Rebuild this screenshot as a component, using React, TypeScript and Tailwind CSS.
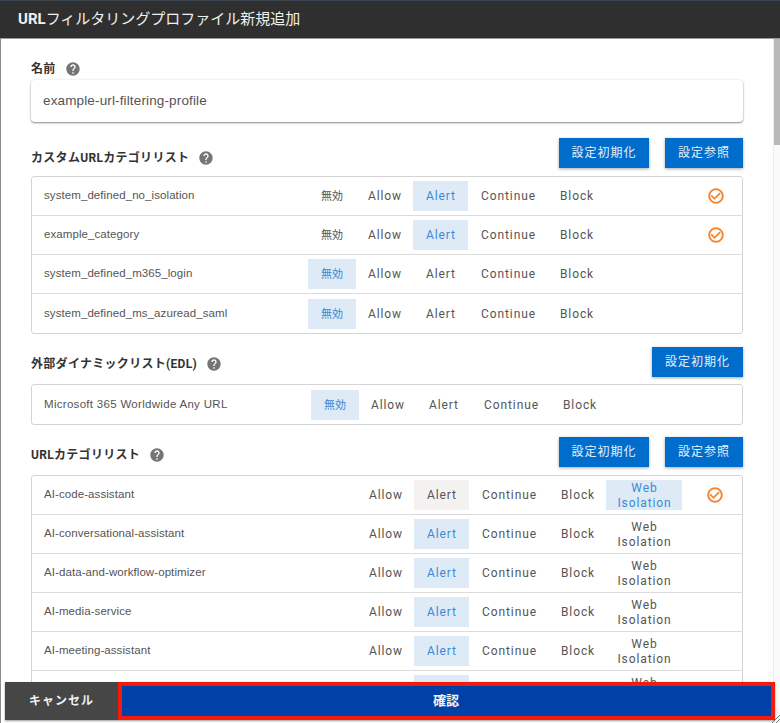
const help = "M12 2C6.48 2 2 6.48 2 12s4.48 10 10 10 10-4.48 10-10S17.52 2 12 2zm1 17h-2v-2h2v2zm2.07-7.75l-.9.92C13.45 12.9 13 13.5 13 15h-2v-.5c0-1.1.45-2.1 1.17-2.83l1.24-1.26c.37-.36.59-.86.59-1.41 0-1.1-.9-2-2-2s-2 .9-2 2H8c0-2.21 1.79-4 4-4s4 1.79 4 4c0 .88-.36 1.68-.93 2.25z";
const check = "M16.59 7.58L10 14.17l-3.59-3.58L5 12l5 5 8-8zM12 2C6.48 2 2 6.48 2 12s4.48 10 10 10 10-4.48 10-10S17.52 2 12 2zm0 18c-4.42 0-8-3.58-8-8s3.58-8 8-8 8 3.58 8 8-3.58 8-8 8z";

function Help() {
  return (
    <svg viewBox="0 0 24 24" className="w-4 h-4 ml-[9px] fill-[#757575] shrink-0">
      <path d={help} />
    </svg>
  );
}

function Heading({ children }: { children: React.ReactNode }) {
  return (
    <div className="flex items-center text-[12px] tracking-[0.3px] font-bold leading-5 text-[#333]">
      <span>{children}</span>
      <Help />
    </div>
  );
}

function Btn({ children, w }: { children: React.ReactNode; w: string }) {
  return (
    <div className={`${w} h-[30px] flex items-center justify-center bg-[#006ccb] text-[#e4f0fa] text-[12px] tracking-[1px] shadow-[0_1px_3px_rgba(0,0,0,0.35)]`}>
      {children}
    </div>
  );
}

function Cell({ label, w, on, hover, small }: { label: string; w: string; on?: boolean; hover?: boolean; small?: boolean }) {
  const tone = on ? "bg-[#deeaf6] text-[#3a8ad6]" : hover ? "bg-[#f4f1f1] text-[#555]" : "text-[#555]";
  return (
    <div className={`${w} ${tone} ${small ? "text-[11px] tracking-[0px]" : "text-[12px] tracking-[0.9px] pl-[1px]"} h-[30px] pt-[1px] shrink-0 flex items-center justify-center text-center leading-[15px]`}>
      {label}
    </div>
  );
}

function Row({ name, nameW, off, active, mark, web, last, webOn, hover, wide }: {
  name: string; nameW: string; off?: boolean; active?: string; mark?: boolean; web?: boolean; last?: boolean; webOn?: boolean; hover?: boolean; wide?: boolean;
}) {
  return (
    <div className={`h-[39px] flex items-center pl-[12px] ${last ? "" : "border-b border-[#dcdcdc]"}`}>
      <div className={`${nameW} ${wide ? "tracking-[0.3px]" : "tracking-[0.08px]"} shrink-0 text-[11.5px] font-['Liberation_Sans',sans-serif] text-[#555]`}>{name}</div>
      {off && <Cell label="無効" w="w-[48px]" on={active === "無効"} small />}
      <Cell label="Allow" w="w-[57px]" />
      <Cell label="Alert" w="w-[55px]" on={active === "Alert"} hover={hover} />
      <Cell label="Continue" w="w-[80px]" />
      <Cell label="Block" w="w-[57px]" />
      {web && <Cell label="Web Isolation" w="w-[76px]" on={webOn} />}
      {mark && (
        <svg viewBox="0 0 24 24" className={`w-[18px] h-[18px] fill-[#f5822a] stroke-[#f5822a] stroke-[0.5] shrink-0 ${web ? "ml-[24px]" : "ml-[102px]"}`}>
          <path d={check} />
        </svg>
      )}
    </div>
  );
}

function Box({ children }: { children: React.ReactNode }) {
  return <div className="border border-[#d4d4d4] rounded-[3px] bg-white">{children}</div>;
}

export default function App() {
  return (
    <div className="relative w-[780px] h-[723px] overflow-hidden bg-white font-['Roboto','Noto_Sans_CJK_JP',sans-serif]">
      <div className="h-[39px] bg-[#2f2f2f] border-t border-[#3c4650] border-b border-b-[#9a9a9a] flex items-center pl-[18px] text-[#f0f0f0] text-[15px]">
        <span className="font-bold">URL</span>
        <span>フィルタリングプロファイル新規追加</span>
      </div>
      <div className="h-[684px] overflow-hidden border-l border-[#8a8a8a] pl-[30px] pr-[37px] pt-[20px]">
        <Heading>名前</Heading>
        <div className="mt-[1px] h-[42px] flex items-center px-3 rounded-[4px] bg-white text-[13.5px] tracking-[0.14px] font-['Liberation_Sans',sans-serif] text-[#555] shadow-[0_1px_2px_rgba(0,0,0,0.45),0_0_3px_rgba(0,0,0,0.08)]">
          example-url-filtering-profile
        </div>

        <div className="mt-4 mb-2 flex items-center justify-between">
          <div className="pt-[10px]"><Heading>カスタムURLカテゴリリスト</Heading></div>
          <div className="flex gap-4">
            <Btn w="w-[90px]">設定初期化</Btn>
            <Btn w="w-[78px]">設定参照</Btn>
          </div>
        </div>
        <Box>
          <Row name="system_defined_no_isolation" nameW="w-[264px]" off active="Alert" mark />
          <Row name="example_category" nameW="w-[264px]" off active="Alert" mark />
          <Row name="system_defined_m365_login" nameW="w-[264px]" off active="無効" />
          <Row name="system_defined_ms_azuread_saml" nameW="w-[264px]" off active="無効" last />
        </Box>

        <div className="mt-[13px] mb-[7px] flex items-center justify-between">
          <div className="pt-[4px]"><Heading>外部ダイナミックリスト(EDL)</Heading></div>
          <Btn w="w-[91px]">設定初期化</Btn>
        </div>
        <Box>
          <Row name="Microsoft 365 Worldwide Any URL" nameW="w-[267px]" off active="無効" last wide />
        </Box>

        <div className="mt-[12px] mb-2 flex items-center justify-between">
          <div className="pt-[6px]"><Heading>URLカテゴリリスト</Heading></div>
          <div className="flex gap-4">
            <Btn w="w-[90px]">設定初期化</Btn>
            <Btn w="w-[78px]">設定参照</Btn>
          </div>
        </div>
        <Box>
          <Row name="AI-code-assistant" nameW="w-[313px]" web webOn hover mark />
          <Row name="AI-conversational-assistant" nameW="w-[313px]" web active="Alert" />
          <Row name="AI-data-and-workflow-optimizer" nameW="w-[313px]" web active="Alert" />
          <Row name="AI-media-service" nameW="w-[313px]" web active="Alert" />
          <Row name="AI-meeting-assistant" nameW="w-[313px]" web active="Alert" />
          <Row name="AI-productivity-assistant" nameW="w-[313px]" web active="Alert" />
        </Box>
      </div>

      <div className="absolute right-0 top-[39px] bottom-0 w-[7px] bg-[#fafafa] border-l border-[#ececec]">
        <div className="h-[106px] bg-[#b9b9b9]" />
      </div>

      <div className="absolute left-[5px] top-[682px] w-[770px] h-[38px] flex shadow-[0_1px_2px_rgba(0,0,0,0.4)] text-[#f0f0f0] text-[12px] font-bold">
        <div className="w-[113px] bg-[#464646] flex items-center justify-center tracking-[1px]">キャンセル</div>
        <div className="flex-1 bg-[#0041a8] border-[4px] border-[#f41a0c] flex items-center justify-center pr-[1px] text-[13px]">確認</div>
      </div>

      <svg viewBox="0 0 8 8" className="absolute right-0 bottom-0 w-2 h-2 stroke-[#777] fill-none">
        <path d="M0 8L8 0M4 8L8 4" />
      </svg>
    </div>
  );
}
